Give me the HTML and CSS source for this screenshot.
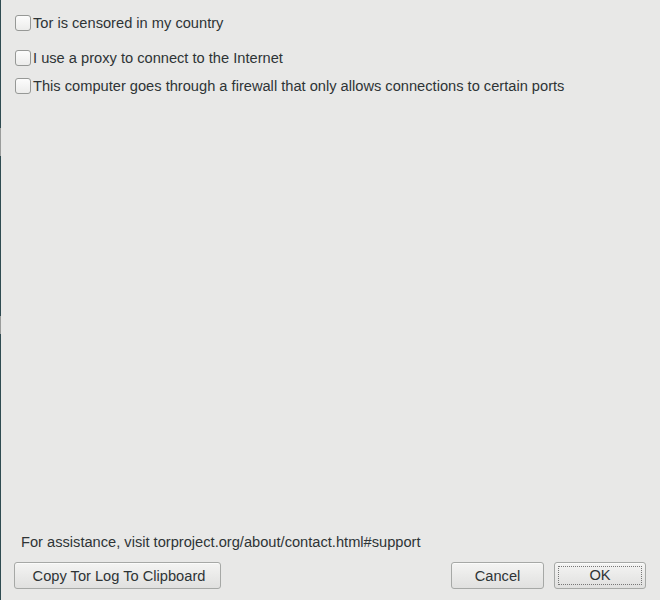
FILE: index.html
```html
<!DOCTYPE html>
<html>
<head>
<meta charset="utf-8">
<link rel="stylesheet" href="styles.css">
</head>
<body>
<div class="window">
  <span class="edge-mark edge-mark-a"></span>
  <span class="edge-mark edge-mark-b"></span>
  <div class="options">
    <label class="option option-first"><span class="check"></span><span>Tor is censored in my country</span></label>
    <label class="option option-second"><span class="check"></span><span>I use a proxy to connect to the Internet</span></label>
    <label class="option option-third"><span class="check"></span><span>This computer goes through a firewall that only allows connections to certain ports</span></label>
  </div>
  <div class="footer">
    <p class="help">For assistance, visit torproject.org/about/contact.html#support</p>
    <div class="buttons">
      <button class="btn btn-copy">Copy Tor Log To Clipboard</button>
      <div class="spacer"></div>
      <button class="btn btn-cancel">Cancel</button>
      <button class="btn btn-ok"><span class="focus">OK</span></button>
    </div>
  </div>
</div>
</body>
</html>
```
FILE: styles.css
```css
html, body {
  margin: 0;
  padding: 0;
  background: #e8e8e7;
}
body {
  font-family: "Liberation Sans", Arial, sans-serif;
  font-size: 14.65px;
  color: #2e3436;
}
.window {
  position: relative;
  height: 600px;
  box-sizing: border-box;
  border-left: 1px solid #2f4b51;
  display: flex;
  flex-direction: column;
}
.edge-mark {
  position: absolute;
  left: -1px;
  width: 1px;
  background: #9a9c9b;
}
.edge-mark-a { top: 128px; height: 28px; }
.edge-mark-b { top: 316px; height: 18px; }
.options {
  display: flex;
  flex-direction: column;
  padding: 14px 0 0 14px;
  flex: 1;
}
.option {
  display: flex;
  align-items: center;
  height: 17px;
  line-height: 17px;
}
.option span:last-child { padding-top: 1px; }
.option-second { margin-top: 18px; }
.option-third { margin-top: 11px; }
.check {
  width: 14px;
  height: 14px;
  border: 1px solid #969896;
  border-radius: 3px;
  background: linear-gradient(#fcfcfc, #ececeb);
  margin-right: 2px;
  flex: none;
}
.footer {
  padding: 0 14px 11px 13px;
}
.help {
  margin: 0 0 11px 7px;
  line-height: 17px;
}
.buttons {
  display: flex;
  align-items: center;
}
.spacer { flex: 1; }
.btn {
  font-family: "Liberation Sans", Arial, sans-serif;
  font-size: 14.65px;
  color: #2e3436;
  height: 27px;
  border: 1px solid #a6a8a6;
  border-radius: 3px;
  background: linear-gradient(#f4f4f3, #e0e0df);
  box-shadow: 0 1px 0 rgba(255,255,255,0.6) inset;
  padding: 0;
  margin: 0;
}
.btn-copy { width: 207px; padding-left: 3px; }
.btn-cancel { width: 93px; }
.btn-ok {
  width: 92px;
  margin-left: 10px;
  padding: 3px;
}
.focus {
  display: block;
  height: 17px;
  line-height: 17px;
  border: 1px dotted #777;
}
```
